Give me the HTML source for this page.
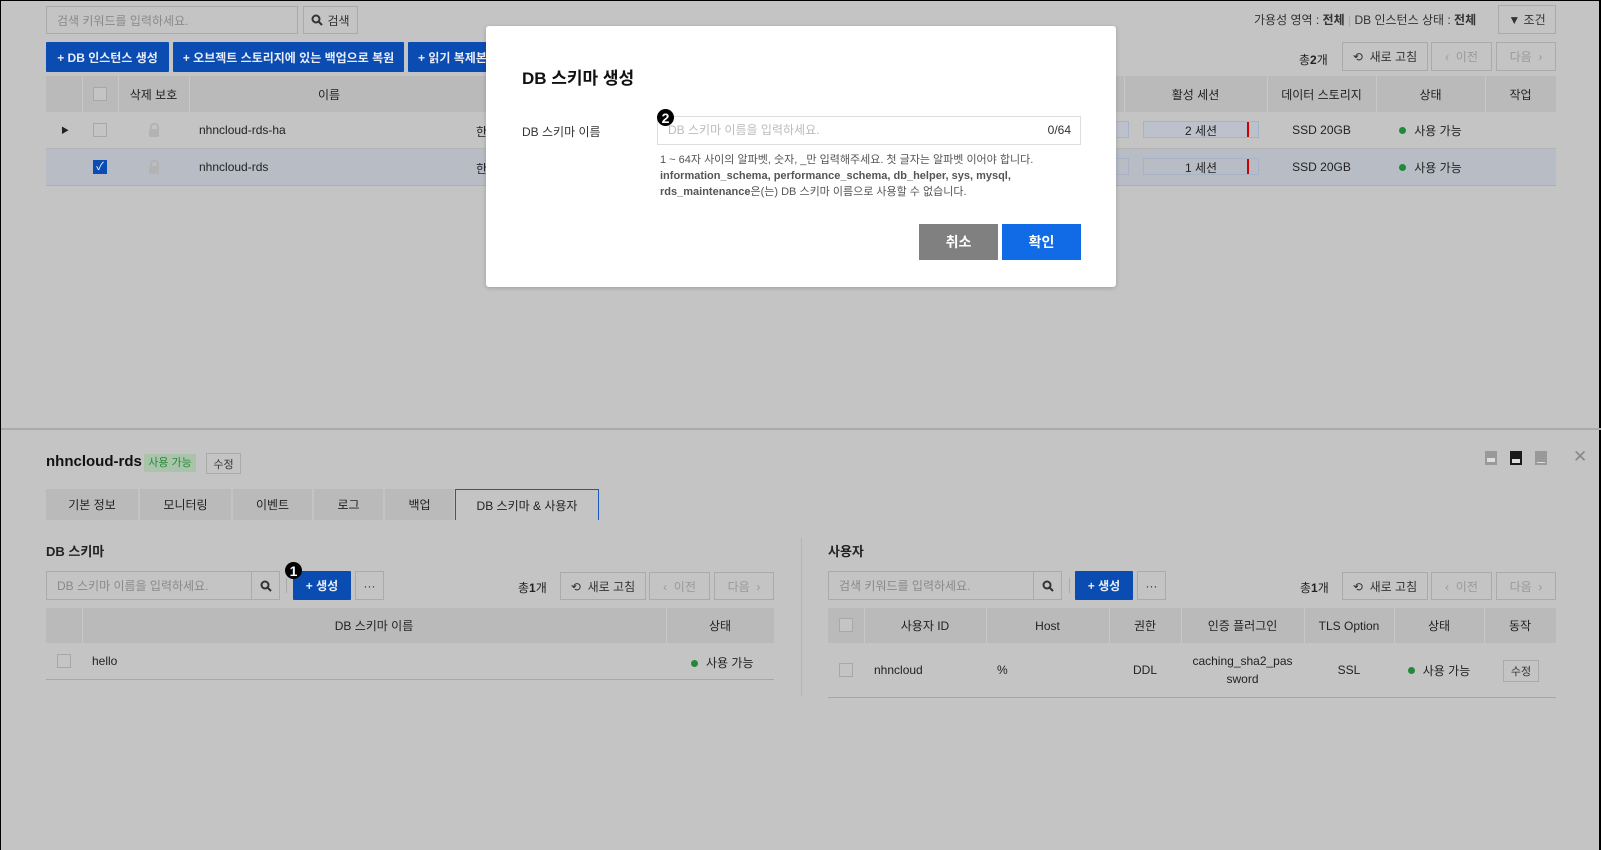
<!DOCTYPE html><html><head><meta charset="utf-8"><style>
*{box-sizing:border-box;margin:0;padding:0}
body{width:1601px;height:850px;background:#c4c4c4;font-family:"Liberation Sans","Noto Sans CJK KR",sans-serif;font-size:12px;color:#222;position:relative;overflow:hidden;border-left:1px solid #000;border-top:1px solid #000;border-right:2px solid #000}
.a{position:absolute}
.inp{position:absolute;border:1px solid #aaa;background:#c4c4c4;color:#8a8a8a;padding-left:10px;display:flex;align-items:center}
.btn{position:absolute;border:1px solid #aaa;background:#c4c4c4;display:flex;align-items:center;justify-content:center;color:#333}
.bb{position:absolute;background:#0b4cb2;color:#e8ecf4;display:flex;align-items:center;justify-content:center;font-weight:bold;border-radius:1px}
.dis{color:#999}
.hd{position:absolute;background:#bababa}
.c{position:absolute;display:flex;align-items:center;justify-content:center;height:100%}
.cb{position:absolute;width:14px;height:14px;border:1px solid #a8a8a8;background:#c4c4c4}
.dot{display:inline-block;width:7px;height:7px;border-radius:50%;background:#1f8a3a;margin-right:8px}
.vl{position:absolute;top:0;bottom:0;width:1px;background:#c8c8c8}
.num{position:absolute;width:17px;height:17px;border-radius:50%;background:#000;color:#fff;font-size:14px;display:flex;align-items:center;justify-content:center;font-weight:bold}
.lock{position:absolute;width:10px;height:8px;background:#b3b3b3;border-radius:1px}
.lock:before{content:"";position:absolute;left:1px;top:-6px;width:5px;height:6px;border:2px solid #b3b3b3;border-bottom:none;border-radius:4px 4px 0 0}
.sv{width:12px;height:12px}
</style></head><body>
<div class="inp" style="left:45px;top:5px;width:252px;height:28px">검색 키워드를 입력하세요.</div>
<div class="btn" style="left:302px;top:5px;width:55px;height:28px"><svg class="sv" viewBox="0 0 12 12"><circle cx="5" cy="5" r="3.5" fill="none" stroke="#333" stroke-width="2"/><path d="M7.5 7.5L11 11" stroke="#333" stroke-width="2"/></svg><span style="margin-left:4px">검색</span></div>
<div class="a" style="left:1253px;top:10px;color:#333">가용성 영역 : <b>전체</b> <span style="color:#aaa">|</span> DB 인스턴스 상태 : <b>전체</b></div>
<div class="btn" style="left:1497px;top:4px;width:58px;height:29px">▼ 조건</div>
<div class="bb" style="left:45px;top:41px;width:123px;height:30px">+ DB 인스턴스 생성</div>
<div class="bb" style="left:172px;top:41px;width:231px;height:30px">+ 오브젝트 스토리지에 있는 백업으로 복원</div>
<div class="bb" style="left:407px;top:41px;width:90px;height:30px;justify-content:flex-start;padding-left:10px">+ 읽기 복제본</div>
<div class="a" style="left:1298px;top:50px">총<b>2</b>개</div>
<div class="btn" style="left:1341px;top:41px;width:86px;height:29px">⟲&nbsp; 새로 고침</div>
<div class="btn dis" style="left:1430px;top:41px;width:61px;height:29px">‹&nbsp; 이전</div>
<div class="btn dis" style="left:1495px;top:41px;width:60px;height:29px">다음 &nbsp;›</div>
<div class="hd" style="left:45px;top:75px;width:1510px;height:36px">
 <div class="vl" style="left:36px"></div><div class="vl" style="left:72px"></div><div class="vl" style="left:143px"></div><div class="vl" style="left:1078px"></div><div class="vl" style="left:1221px"></div><div class="vl" style="left:1330px"></div><div class="vl" style="left:1439px"></div>
 <div class="cb" style="left:47px;top:11px"></div>
 <div class="c" style="left:72px;width:71px">삭제 보호</div>
 <div class="c" style="left:143px;width:280px">이름</div>
 <div class="c" style="left:1078px;width:143px">활성 세션</div>
 <div class="c" style="left:1221px;width:109px">데이터 스토리지</div>
 <div class="c" style="left:1330px;width:109px">상태</div>
 <div class="c" style="left:1439px;width:71px">작업</div>
</div>
<div class="a" style="left:45px;top:111px;width:1510px;height:37px;border-bottom:1px solid #b4b4b4">
 <div class="a" style="left:15px;top:13px;font-size:8px">▶</div>
 <div class="cb" style="left:47px;top:11px"></div>
 <div class="lock" style="left:103px;top:17px"></div>
 <div class="a" style="left:153px;top:11px">nhncloud-rds-ha</div>
 <div class="a" style="left:430px;top:11px">한</div>
 <div class="a" style="left:1065px;top:9px;width:18px;height:17px;border:1px solid #a7b2c8;background:#bcc1cb"></div>
 <div class="a" style="left:1097px;top:9px;width:116px;height:17px;border:1px solid #a7b2c8;background:#bcc1cb;text-align:center;line-height:18px">2 세션<span class="a" style="left:103px;top:0;width:2px;height:15px;background:#c00"></span></div>
 <div class="c" style="left:1221px;width:109px">SSD 20GB</div>
 <div class="c" style="left:1330px;width:109px"><span class="dot"></span>사용 가능</div>
</div>
<div class="a" style="left:45px;top:148px;width:1510px;height:37px;background:#b8bcc5;border-bottom:1px solid #a9aeb8">
 <div class="a" style="left:47px;top:11px;width:14px;height:14px;background:#0b4cb2;color:#fff;font-size:11px;text-align:center;line-height:14px">✓</div>
 <div class="lock" style="left:103px;top:17px"></div>
 <div class="a" style="left:153px;top:11px">nhncloud-rds</div>
 <div class="a" style="left:430px;top:11px">한</div>
 <div class="a" style="left:1065px;top:9px;width:18px;height:17px;border:1px solid #a7b2c8;background:#b8bcc5"></div>
 <div class="a" style="left:1097px;top:9px;width:116px;height:17px;border:1px solid #a7b2c8;background:#b8bcc5;text-align:center;line-height:18px">1 세션<span class="a" style="left:103px;top:0;width:2px;height:15px;background:#c00"></span></div>
 <div class="c" style="left:1221px;width:109px">SSD 20GB</div>
 <div class="c" style="left:1330px;width:109px"><span class="dot"></span>사용 가능</div>
</div>
<div class="a" style="left:485px;top:25px;width:630px;height:261px;background:#fff;border-radius:3px;box-shadow:0 1px 4px rgba(0,0,0,.2)">
 <div class="a" style="left:36px;top:38px;font-size:17px;font-weight:bold;color:#111">DB 스키마 생성</div>
 <div class="a" style="left:36px;top:97px;color:#333">DB 스키마 이름</div>
 <div class="a" style="left:171px;top:90px;width:424px;height:29px;border:1px solid #ddd;color:#bbb;padding-left:10px;line-height:27px">DB 스키마 이름을 입력하세요.<span class="a" style="right:9px;top:0;color:#333">0/64</span></div>
 <div class="num" style="left:171px;top:83px">2</div>
 <div class="a" style="left:174px;top:126px;font-size:11px;line-height:16px;color:#555">1 ~ 64자 사이의 알파벳, 숫자, _만 입력해주세요. 첫 글자는 알파벳 이어야 합니다.<br><b>information_schema, performance_schema, db_helper, sys, mysql,<br>rds_maintenance</b>은(는) DB 스키마 이름으로 사용할 수 없습니다.</div>
 <div class="a" style="left:433px;top:198px;width:79px;height:36px;background:#808080;color:#fff;font-size:14px;font-weight:bold;display:flex;align-items:center;justify-content:center">취소</div>
 <div class="a" style="left:516px;top:198px;width:79px;height:36px;background:#126be6;color:#fff;font-size:14px;font-weight:bold;display:flex;align-items:center;justify-content:center">확인</div>
</div>
<div class="a" style="left:0;top:427px;width:1601px;height:2px;background:#aaa"></div>
<div class="a" style="left:45px;top:452px;font-size:15px;font-weight:bold;color:#111">nhncloud-rds</div>
<div class="a" style="left:143px;top:453px;width:52px;height:18px;background:#a9c4ab;color:#2a8a3a;text-align:center;line-height:18px;font-size:11px">사용 가능</div>
<div class="btn" style="left:205px;top:452px;width:35px;height:21px;font-size:11px">수정</div>
<div class="a" style="left:1484px;top:450px;width:12px;height:14px;background:#999"><div class="a" style="left:2px;top:7px;width:8px;height:4px;background:#ddd"></div></div>
<div class="a" style="left:1509px;top:450px;width:12px;height:14px;background:#1a1a1a"><div class="a" style="left:2px;top:8px;width:8px;height:4px;background:#ddd"></div></div>
<div class="a" style="left:1534px;top:450px;width:12px;height:14px;background:#999"><div class="a" style="left:2px;top:11px;width:8px;height:1px;background:#ddd"></div></div>
<div class="a" style="left:1572px;top:446px;font-size:17px;color:#888">✕</div>
<div class="a" style="left:45px;top:488px;width:553px;height:31px">
 <div class="a" style="left:0;width:92px;height:31px;background:#bababa;display:flex;align-items:center;justify-content:center">기본 정보</div>
 <div class="a" style="left:94px;width:91px;height:31px;background:#bababa;display:flex;align-items:center;justify-content:center">모니터링</div>
 <div class="a" style="left:187px;width:79px;height:31px;background:#bababa;display:flex;align-items:center;justify-content:center">이벤트</div>
 <div class="a" style="left:268px;width:69px;height:31px;background:#bababa;display:flex;align-items:center;justify-content:center">로그</div>
 <div class="a" style="left:339px;width:69px;height:31px;background:#bababa;display:flex;align-items:center;justify-content:center">백업</div>
 <div class="a" style="left:409px;width:144px;height:31px;border:1px solid #1a57c0;border-bottom:none;background:#c4c4c4;display:flex;align-items:center;justify-content:center">DB 스키마 &amp; 사용자</div>
</div>
<div class="a" style="left:45px;top:540px;font-size:13px;font-weight:bold">DB 스키마</div>
<div class="a" style="left:800px;top:537px;width:1px;height:158px;background:#b4b4b4"></div>
<div class="inp" style="left:45px;top:570px;width:206px;height:29px">DB 스키마 이름을 입력하세요.</div>
<div class="btn" style="left:250px;top:570px;width:29px;height:29px"><svg class="sv" viewBox="0 0 12 12"><circle cx="5" cy="5" r="3.5" fill="none" stroke="#333" stroke-width="2"/><path d="M7.5 7.5L11 11" stroke="#333" stroke-width="2"/></svg></div>
<div class="a" style="left:285px;top:577px;width:1px;height:15px;background:#aaa"></div>
<div class="bb" style="left:292px;top:570px;width:58px;height:29px">+ 생성</div>
<div class="num" style="left:284px;top:561px">1</div>
<div class="btn" style="left:354px;top:570px;width:29px;height:29px">···</div>
<div class="a" style="left:517px;top:578px">총<b>1</b>개</div>
<div class="btn" style="left:559px;top:571px;width:86px;height:28px">⟲&nbsp; 새로 고침</div>
<div class="btn dis" style="left:648px;top:571px;width:61px;height:28px">‹&nbsp; 이전</div>
<div class="btn dis" style="left:713px;top:571px;width:60px;height:28px">다음 &nbsp;›</div>
<div class="hd" style="left:45px;top:607px;width:728px;height:35px">
 <div class="vl" style="left:36px"></div><div class="vl" style="left:620px"></div>
 <div class="c" style="left:36px;width:584px">DB 스키마 이름</div>
 <div class="c" style="left:620px;width:108px">상태</div>
</div>
<div class="a" style="left:45px;top:642px;width:728px;height:37px;border-bottom:1px solid #a8a8a8">
 <div class="cb" style="left:11px;top:11px"></div>
 <div class="a" style="left:46px;top:11px">hello</div>
 <div class="a" style="left:645px;top:11px"><span class="dot"></span>사용 가능</div>
</div>
<div class="a" style="left:827px;top:540px;font-size:13px;font-weight:bold">사용자</div>
<div class="inp" style="left:827px;top:570px;width:206px;height:29px">검색 키워드를 입력하세요.</div>
<div class="btn" style="left:1032px;top:570px;width:29px;height:29px"><svg class="sv" viewBox="0 0 12 12"><circle cx="5" cy="5" r="3.5" fill="none" stroke="#333" stroke-width="2"/><path d="M7.5 7.5L11 11" stroke="#333" stroke-width="2"/></svg></div>
<div class="a" style="left:1068px;top:577px;width:1px;height:15px;background:#aaa"></div>
<div class="bb" style="left:1074px;top:570px;width:58px;height:29px">+ 생성</div>
<div class="btn" style="left:1136px;top:570px;width:29px;height:29px">···</div>
<div class="a" style="left:1299px;top:578px">총<b>1</b>개</div>
<div class="btn" style="left:1341px;top:571px;width:86px;height:28px">⟲&nbsp; 새로 고침</div>
<div class="btn dis" style="left:1430px;top:571px;width:61px;height:28px">‹&nbsp; 이전</div>
<div class="btn dis" style="left:1495px;top:571px;width:60px;height:28px">다음 &nbsp;›</div>
<div class="hd" style="left:827px;top:607px;width:728px;height:35px">
 <div class="vl" style="left:36px"></div><div class="vl" style="left:158px"></div><div class="vl" style="left:281px"></div><div class="vl" style="left:353px"></div><div class="vl" style="left:476px"></div><div class="vl" style="left:566px"></div><div class="vl" style="left:656px"></div>
 <div class="cb" style="left:11px;top:10px"></div>
 <div class="c" style="left:36px;width:122px">사용자 ID</div>
 <div class="c" style="left:158px;width:123px">Host</div>
 <div class="c" style="left:281px;width:72px">권한</div>
 <div class="c" style="left:353px;width:123px">인증 플러그인</div>
 <div class="c" style="left:476px;width:90px">TLS Option</div>
 <div class="c" style="left:566px;width:90px">상태</div>
 <div class="c" style="left:656px;width:72px">동작</div>
</div>
<div class="a" style="left:827px;top:642px;width:728px;height:55px;border-bottom:1px solid #a8a8a8">
 <div class="cb" style="left:11px;top:20px"></div>
 <div class="a" style="left:46px;top:20px">nhncloud</div>
 <div class="a" style="left:169px;top:20px">%</div>
 <div class="c" style="left:281px;width:72px">DDL</div>
 <div class="c" style="left:353px;width:123px;text-align:center;line-height:18px">caching_sha2_pas<br>sword</div>
 <div class="c" style="left:476px;width:90px">SSL</div>
 <div class="c" style="left:566px;width:90px"><span class="dot"></span>사용 가능</div>
 <div class="btn" style="left:675px;top:17px;width:36px;height:22px;font-size:11px">수정</div>
</div>
</body></html>
